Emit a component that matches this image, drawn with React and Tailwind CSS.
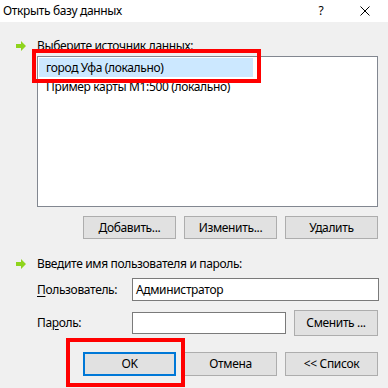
import React from "react";

function Arrow() {
  return (
    <svg width="10" height="10" viewBox="0 0 10 10" className="shrink-0">
      <path d="M0 3h5V0l5 5-5 5V7H0z" fill="#8fd41c" />
    </svg>
  );
}

function Btn({ children, className = "" }) {
  return (
    <div
      className={
        "flex items-center justify-center bg-[#e1e1e1] border border-[#adadad] text-[12px] text-black " +
        className
      }
    >
      {children}
    </div>
  );
}

export default function App() {
  return (
    <div
      className="relative w-[388px] h-[388px] overflow-hidden bg-[#f0f0f0] text-black text-[12px] tracking-[-0.35px]"
      style={{ fontFamily: '"Noto Sans", "Liberation Sans", sans-serif' }}
    >
      {/* TITLE BAR */}
      <div className="h-[22px] bg-white flex items-center">
        <span className="pl-[3px] flex-1">Открыть базу данных</span>
        <span className="w-[10px] text-center mr-[34px]">?</span>
        <svg width="10" height="10" viewBox="0 0 10 10" className="mr-[18px]">
          <path d="M0.5 0.5l9 9M9.5 0.5l-9 9" stroke="#000" strokeWidth="1" />
        </svg>
      </div>

      {/* SOURCE */}
      <div className="flex items-center gap-[11px] pl-[16px] mt-[17px] h-[14px]">
        <Arrow />
        <span>Выберите источник данных:</span>
      </div>
      <div className="ml-[37px] mt-[3px] w-[341px] h-[151px] bg-white border border-[#828790] pt-[1px] px-[1px]">
        <div className="h-[19px] w-[214px] bg-[#cce8ff] flex items-center pl-[7px]">город Уфа (локально)</div>
        <div className="h-[19px] flex items-center pl-[7px]">Пример карты М1:500 (локально)</div>
      </div>
      <div className="flex justify-end gap-[8px] pr-[10px] mt-[9px]">
        <Btn className="w-[93px] h-[23px]">Добавить...</Btn>
        <Btn className="w-[93px] h-[23px]">Изменить...</Btn>
        <Btn className="w-[93px] h-[23px]">Удалить</Btn>
      </div>

      {/* CREDENTIALS */}
      <div className="flex items-center gap-[11px] pl-[16px] mt-[18px] h-[14px]">
        <Arrow />
        <span>Введите имя пользователя и пароль:</span>
      </div>
      <div className="flex items-center pl-[37px] mt-[7px]">
        <span className="w-[95px]">
          <span className="underline underline-offset-2">П</span>ользователь:
        </span>
        <div className="w-[247px] h-[23px] bg-white border border-[#7a7a7a] flex items-center pl-[3px]">
          Администратор
        </div>
      </div>
      <div className="flex items-center pl-[37px] mt-[9px]">
        <span className="w-[95px]">
          Па<span className="underline underline-offset-2">р</span>оль:
        </span>
        <div className="w-[154px] h-[22px] bg-white border border-[#7a7a7a]" />
        <Btn className="ml-[8px] w-[84px] h-[26px]">Сменить ...</Btn>
      </div>
      <div className="flex justify-end gap-[8px] pr-[10px] mt-[16px]">
        <Btn className="w-[93px] h-[24px] !border-2 !border-[#0078d7]">OK</Btn>
        <Btn className="w-[93px] h-[24px]">Отмена</Btn>
        <Btn className="w-[93px] h-[24px]">&lt;&lt; Список</Btn>
      </div>

      {/* ANNOTATION FRAMES */}
      <div className="absolute left-[32px] top-[49px] w-[229px] h-[34px] border-[4px] border-[#ff0000]" />
      <div className="absolute left-[66px] top-[338px] w-[119px] h-[49px] border-[4px] border-[#ff0000]" />
    </div>
  );
}
